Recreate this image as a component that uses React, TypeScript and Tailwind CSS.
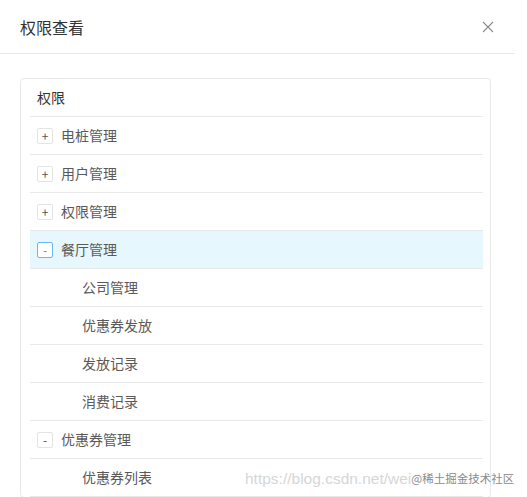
import React from "react";

type Row = { label: string; level: 0 | 1; state?: "plus" | "minus"; active?: boolean };

const rows: Row[] = [
  { label: "电桩管理", level: 0, state: "plus" },
  { label: "用户管理", level: 0, state: "plus" },
  { label: "权限管理", level: 0, state: "plus" },
  { label: "餐厅管理", level: 0, state: "minus", active: true },
  { label: "公司管理", level: 1 },
  { label: "优惠券发放", level: 1 },
  { label: "发放记录", level: 1 },
  { label: "消费记录", level: 1 },
  { label: "优惠券管理", level: 0, state: "minus" },
  { label: "优惠券列表", level: 1 },
];

const Expander = ({ state, active }: { state: "plus" | "minus"; active?: boolean }) => (
  <span
    className={`flex h-[16px] w-[16px] items-center justify-center rounded-[2px] border bg-white text-[12px] leading-none ${
      active ? "border-[#69b7f7] text-[#3b95e6]" : "border-[#e4e4e4] text-[#555]"
    }`}
  >
    {state === "plus" ? "+" : "-"}
  </span>
);

export default function App() {
  return (
    <div
      className="relative h-[497px] w-full overflow-hidden bg-white"
      style={{ fontFamily: '"Noto Sans CJK SC", "Noto Sans", sans-serif' }}
    >
      <div className="w-[515px]">
        {/* Header */}
        <div className="flex h-[54px] items-center justify-between border-b border-[#e8e8e8] pl-5 pr-[21px]">
          <span className="text-[16px] text-[#333]">权限查看</span>
          <svg width="12" height="12" viewBox="0 0 12 12">
            <path d="M1 1 L11 11 M11 1 L1 11" stroke="#8c8c8c" strokeWidth="1.1" fill="none" />
          </svg>
        </div>

        {/* Body */}
        <div className="pl-5 pr-6 pt-6">
          <div className="rounded-[4px] border border-[#e8e8e8] pl-[9px] pr-[7px]">
            <div className="flex h-[38px] items-center border-b border-[#e8e8e8] pl-[7px] text-[14px] text-[#333]">
              权限
            </div>
            {rows.map((row) => (
              <div
                key={row.label}
                className={`flex h-[38px] items-center border-b border-[#e8e8e8] text-[14px] text-[#595959] ${
                  row.active ? "bg-[#e6f7fe]" : ""
                } ${row.level === 0 ? "gap-[8px] pl-[7px]" : "pl-[52px]"}`}
              >
                {row.state && <Expander state={row.state} active={row.active} />}
                <span>{row.label}</span>
              </div>
            ))}
          </div>
        </div>
      </div>

      {/* Watermark */}
      <div className="pointer-events-none absolute left-[245px] top-[467px] flex items-center whitespace-nowrap">
        <span className="text-[15.5px] text-[#d6d6d6]" style={{ fontFamily: '"Liberation Sans", sans-serif' }}>
          https://blog.csdn.net/wei
        </span>
        <span
          className="text-[11.5px] text-[#8a8a8a]"
          style={{ textShadow: "0 0 2px #fff, 0 0 2px #fff" }}
        >
          @稀土掘金技术社区
        </span>
      </div>
    </div>
  );
}
